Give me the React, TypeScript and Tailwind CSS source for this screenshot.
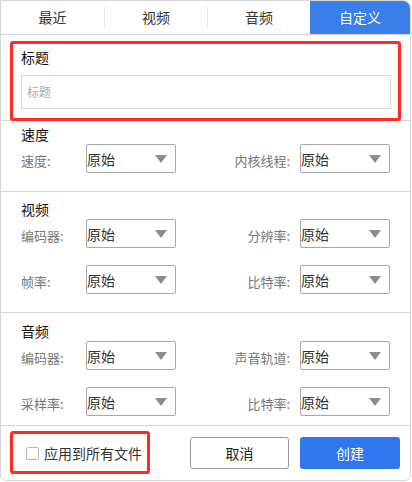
import React from "react";

const font = { fontFamily: '"Noto Sans CJK SC", "Noto Sans", sans-serif' };

function Select() {
  return (
    <div className="relative flex h-[29px] w-[90px] items-center rounded-[2px] border border-[#a8a8a8] bg-white">
      <span className="pl-0 text-[14px] leading-none text-[#333]">原始</span>
      <svg className="absolute right-[8px] top-[10px]" width="12" height="9" viewBox="0 0 12 9">
        <polygon points="0,0 12,0 6,8" fill="#8c8c8c" />
      </svg>
    </div>
  );
}

function Row({ left, right, className = "" }: { left: string; right: string; className?: string }) {
  return (
    <div className={"flex justify-between px-[20px] " + className}>
      <div className="flex items-center">
        <span className="mt-[4px] w-[65px] text-[13px] leading-none text-[#777]">{left}</span>
        <Select />
      </div>
      <div className="flex items-center">
        <span className="mr-[10px] mt-[4px] text-right text-[13px] leading-none text-[#777]">{right}</span>
        <Select />
      </div>
    </div>
  );
}

export default function App() {
  return (
    <div style={font} className="relative h-[482px] w-[412px] bg-white">
      <div className="flex h-[481px] w-[411px] flex-col overflow-hidden rounded-b-[6px] rounded-tr-[8px] border border-[#d6d6d6] bg-white">
        {/* Tabs */}
        <div className="flex h-[34px] shrink-0 border-b border-[#d6d6d6]">
          <div className="flex w-[103px] items-center justify-center text-[14px] text-[#333]">最近</div>
          <div className="my-[6px] w-px bg-[#e4e4e4]" />
          <div className="flex w-[102px] items-center justify-center text-[14px] text-[#333]">视频</div>
          <div className="my-[6px] w-px bg-[#e4e4e4]" />
          <div className="flex w-[102px] items-center justify-center text-[14px] text-[#333]">音频</div>
          <div className="flex flex-1 items-center justify-center bg-[#3a7ee9] text-[14px] text-white">自定义</div>
        </div>

        {/* Title */}
        <div className="flex h-[86px] shrink-0 flex-col border-b border-[#d6d6d6] px-[20px] pt-[12px]">
          <div className="text-[14px] leading-[20px] text-[#111]">标题</div>
          <div className="mt-[8px] flex h-[34px] w-[370px] items-center border border-[#d6d6d6] px-[5px] text-[12px] text-[#aaa]">
            标题
          </div>
        </div>

        {/* Speed */}
        <div className="flex h-[71px] shrink-0 flex-col border-b border-[#d6d6d6] pt-[3px]">
          <div className="px-[20px] text-[14px] leading-[20px] text-[#111]">速度</div>
          <Row left="速度:" right="内核线程:" />
        </div>

        {/* Video */}
        <div className="flex h-[121px] shrink-0 flex-col border-b border-[#d6d6d6] pt-[7px]">
          <div className="px-[20px] text-[14px] leading-[20px] text-[#111]">视频</div>
          <Row left="编码器:" right="分辨率:" />
          <Row left="帧率:" right="比特率:" className="mt-[17px]" />
        </div>

        {/* Audio */}
        <div className="flex h-[113px] shrink-0 flex-col border-b border-[#d6d6d6] pt-[8px]">
          <div className="px-[20px] text-[14px] leading-[20px] text-[#111]">音频</div>
          <Row left="编码器:" right="声音轨道:" />
          <Row left="采样率:" right="比特率:" className="mt-[17px]" />
        </div>

        {/* Footer */}
        <div className="flex flex-1 items-center justify-between pl-[25px] pr-[10px]">
          <div className="flex items-center">
            <div className="h-[13px] w-[13px] rounded-[2px] border border-[#b5b5b5] bg-white" />
            <span className="ml-[5px] text-[14px] text-[#333]">应用到所有文件</span>
          </div>
          <div className="flex items-center">
            <button className="flex h-[32px] w-[99px] items-center justify-center rounded-[3px] border border-[#9a9a9a] bg-white text-[14px] text-[#222]">
              取消
            </button>
            <button className="ml-[11px] flex h-[32px] w-[100px] items-center justify-center rounded-[3px] bg-[#2f76ef] text-[14px] text-white">
              创建
            </button>
          </div>
        </div>
      </div>

      {/* Red annotation boxes */}
      <div className="pointer-events-none absolute left-[10px] top-[41px] h-[80px] w-[391px] rounded-[3px] border-[3px] border-[#ff2b22]" />
      <div className="pointer-events-none absolute left-[10px] top-[431px] h-[43px] w-[140px] rounded-[3px] border-[3px] border-[#ff2b22]" />
    </div>
  );
}
